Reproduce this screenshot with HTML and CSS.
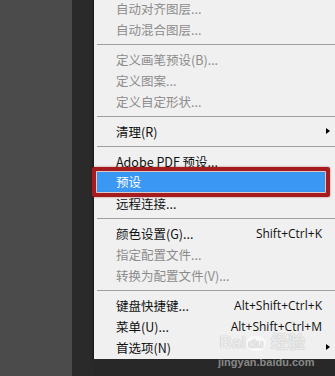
FILE: index.html
```html
<!DOCTYPE html>
<html lang="zh-CN">
<head>
    <meta charset="UTF-8">
    <title>编辑菜单</title>
    <link rel="stylesheet" href="styles.css">
</head>
<body>
    <div class="panel"></div>
    <div class="gutter"></div>
    <div class="main">
        <ul class="menu">
            <li class="item disabled">自动对齐图层...</li>
            <li class="item disabled">自动混合图层...</li>
            <li class="sep"></li>
            <li class="item disabled">定义画笔预设(B)...</li>
            <li class="item disabled">定义图案...</li>
            <li class="item disabled">定义自定形状...</li>
            <li class="sep"></li>
            <li class="item sub">清理(R)</li>
            <li class="sep"></li>
            <li class="item">Adobe PDF 预设...</li>
            <li class="item active"><span class="hl">预设</span></li>
            <li class="item">远程连接...</li>
            <li class="sep"></li>
            <li class="item">颜色设置(G)...<span class="key">Shift+Ctrl+K</span></li>
            <li class="item disabled">指定配置文件...</li>
            <li class="item disabled">转换为配置文件(V)...</li>
            <li class="sep"></li>
            <li class="item">键盘快捷键...<span class="key">Alt+Shift+Ctrl+K</span></li>
            <li class="item">菜单(U)...<span class="key">Alt+Shift+Ctrl+M</span></li>
            <li class="item sub">首选项(N)</li>
        </ul>
        <div class="footer"></div>
        <div class="watermark">
            <div class="wm-logo">Bai<b>du</b> 经验</div>
            <div class="wm-url">jingyan.baidu.com</div>
        </div>
    </div>
</body>
</html>
```

FILE: styles.css
```css
body {
    margin: 0;
    height: 376px;
    display: flex;
    overflow: hidden;
    background: #282828;
    font-family: "Noto Sans CJK SC", "Noto Sans", sans-serif;
}
.panel {
    width: 72px;
    background: #4b4b4b;
}
.gutter {
    width: 22px;
    background: #2a2a2a;
}
.main {
    flex: 1;
    display: flex;
    flex-direction: column;
    position: relative;
}
.menu {
    list-style: none;
    margin: -2px 0 0 0;
    padding: 0 0 1px 0;
    background: #f0f0f0;
    box-shadow: -1px 1px 2px rgba(0,0,0,0.5);
}
.item {
    height: 21px;
    line-height: 21px;
    padding: 0 13px 0 22px;
    font-size: 12.5px;
    color: #111;
    display: flex;
    justify-content: space-between;
    position: relative;
}
.disabled {
    color: #8c8c8c;
}
.key {
    font-family: "Open Sans", "Noto Sans", sans-serif;
    font-size: 12px;
}
.sub::after {
    content: "";
    position: absolute;
    right: 5px;
    top: 7px;
    border-left: 4px solid #000;
    border-top: 3.5px solid transparent;
    border-bottom: 3.5px solid transparent;
}
.sep {
    height: 1px;
    margin: 4px 0 4px 3px;
    background: #a0a0a0;
}
.active {
    padding: 0;
}
.hl {
    flex: 1;
    margin: 0 10px 0 3px;
    padding-left: 19px;
    height: 20px;
    line-height: 20px;
    background: #3a97f3;
    color: #fff;
}
.active::after {
    content: "";
    position: absolute;
    left: -2px;
    right: 5px;
    top: -5px;
    bottom: -4px;
    border: 4px solid #a51b1e;
    border-radius: 2px;
    box-shadow: 0 0 2px rgba(120,0,0,0.6), inset 0 0 2px rgba(120,0,0,0.6);
}
.footer {
    flex: 1;
    background: #282828;
}
.watermark {
    position: absolute;
    left: 124px;
    top: 334px;
    width: 88px;
    color: rgba(255,255,255,0.8);
    text-shadow: 0 0 1px rgba(0,0,0,0.35);
    text-align: center;
    pointer-events: none;
}
.wm-logo {
    font-family: "Liberation Sans", sans-serif;
    font-size: 17px;
    font-weight: bold;
    line-height: 18px;
    white-space: nowrap;
}
.wm-logo b {
    font-size: 13px;
    background: rgba(255,255,255,0.6);
    color: #eaeaea;
    border-radius: 8px;
    padding: 0 2px;
}
.wm-url {
    font-family: "Liberation Sans", sans-serif;
    font-size: 11px;
    font-weight: bold;
    line-height: 12px;
    margin-top: 3px;
    color: rgba(255,255,255,0.45);
    text-shadow: none;
}
```
